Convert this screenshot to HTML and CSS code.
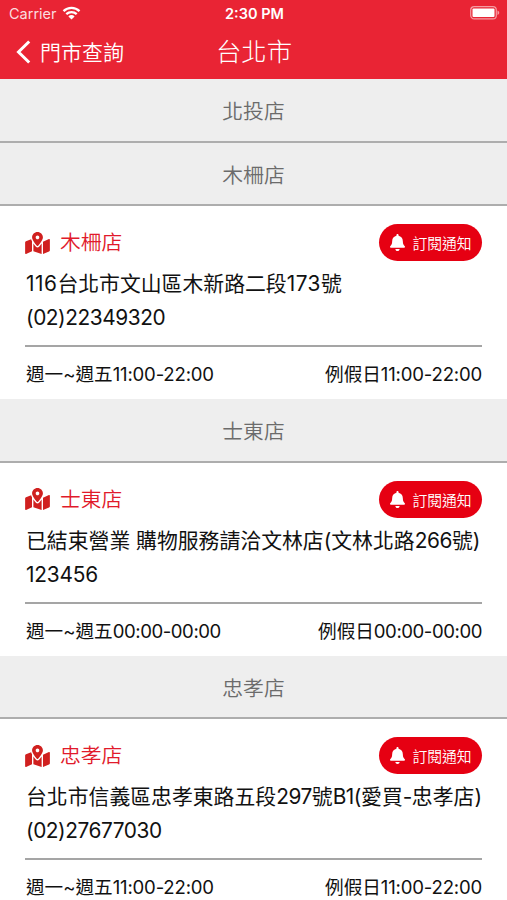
FILE: index.html
```html
<!DOCTYPE html>
<html lang="zh-Hant">
<head>
    <meta charset="UTF-8">
    <meta name="viewport" content="width=device-width, initial-scale=1.0">
    <title>門市查詢 - 台北市</title>
    <link rel="stylesheet" href="styles.css">
</head>
<body>
    <!-- Shared icons -->
    <svg class="hidden">
        <symbol id="icon-map" viewBox="0 0 576 512">
            <path d="M288 0c-69.600 0-126 56.400-126 126 0 56.300 82.400 158.800 113.900 196 6.400 7.500 17.800 7.500 24.200 0C331.700 284.800 414 182.300 414 126 414 56.400 357.600 0 288 0zm0 168c-23.200 0-42-18.800-42-42s18.800-42 42-42 42 18.800 42 42-18.800 42-42 42zM20.100 216A32 32 0 0 0 0 245.700v250.300c0 11.300 11.400 19.100 21.900 14.900L160 448V214.900c-8.800-16-16.100-31.500-21.300-46.400L20.100 216zM288 359.700c-14.100 0-27.400-6.200-36.500-17-19.700-23.200-40.600-49.600-59.500-76.700v182l192 64V266c-18.900 27.100-39.800 53.500-59.500 76.700-9.100 10.800-22.400 17-36.500 17zm266.100-198.500L416 224v288l139.900-56A32 32 0 0 0 576 426.300V176c0-11.300-11.400-19.100-21.900-14.800z"/>
        </symbol>
        <symbol id="icon-bell" viewBox="0 0 448 512">
            <path d="M224 512c35.300 0 64-28.700 64-64H160c0 35.300 28.600 64 64 64zm215.400-149.700c-19.300-20.800-55.500-52-55.500-154.300 0-77.700-54.500-139.900-127.900-155.200V32c0-17.700-14.300-32-32-32s-32 14.300-32 32v20.800C118.600 68.100 64.100 130.300 64.100 208c0 102.300-36.200 133.500-55.500 154.300-6 6.400-8.700 14.100-8.600 21.700.1 16.400 13 32 32.100 32h383.800c19.100 0 32-15.600 32.100-32 .1-7.600-2.600-15.300-8.600-21.700z"/>
        </symbol>
    </svg>

    <header class="header">
        <div class="status-bar">
            <div class="carrier">
                <span>Carrier</span>
                <svg class="wifi" viewBox="0 0 18 14">
                    <path d="M1 5.200a11.500 11.500 0 0 1 16 0M3.800 8.200a7.500 7.500 0 0 1 10.400 0"/>
                    <path class="wifi-dot" d="M9 13.500L5.900 10.400a4.400 4.400 0 0 1 6.200 0z"/>
                </svg>
            </div>
            <span class="clock">2:30 PM</span>
            <svg class="battery" viewBox="0 0 31 14">
                <rect class="battery-case" x="1.700" y="0.700" width="25.600" height="12.200" rx="3.500"/>
                <rect class="battery-level" x="3.500" y="2.500" width="22" height="8.600" rx="1"/>
                <path class="battery-cap" d="M28.500 4.600c2.300 1 2.300 3.400 0 4.400z"/>
            </svg>
        </div>
        <nav class="nav-bar">
            <a class="back">
                <svg class="chevron" viewBox="0 0 16 24"><path d="M14.200 1.500L3.500 12l10.700 10.500"/></svg>
                <span>門市查詢</span>
            </a>
            <h1>台北市</h1>
        </nav>
    </header>

    <main class="store-list">
        <h2 class="store-header">北投店</h2>

        <h2 class="store-header">木柵店</h2>
        <section class="store">
            <div class="store-top">
                <svg class="map-icon"><use href="#icon-map"/></svg>
                <h3>木柵店</h3>
                <button class="btn-notify"><svg class="bell-icon"><use href="#icon-bell"/></svg>訂閱通知</button>
            </div>
            <p class="info"><span class="num-wide">116</span>台北市文山區木新路二段<span class="num-wide">173</span>號</p>
            <p class="info"><span class="num">(02)22349320</span></p>
            <div class="hours">
                <span>週一~週五<span class="num-loose">11:00-22:00</span></span>
                <span>例假日<span class="num-loose">11:00-22:00</span></span>
            </div>
        </section>

        <h2 class="store-header">士東店</h2>
        <section class="store">
            <div class="store-top">
                <svg class="map-icon"><use href="#icon-map"/></svg>
                <h3>士東店</h3>
                <button class="btn-notify"><svg class="bell-icon"><use href="#icon-bell"/></svg>訂閱通知</button>
            </div>
            <p class="info">已結束營業 購物服務請洽文林店(文林北路<span class="num">266</span>號)</p>
            <p class="info"><span class="num-loose">123456</span></p>
            <div class="hours">
                <span>週一~週五<span class="num">00:00-00:00</span></span>
                <span>例假日<span class="num">00:00-00:00</span></span>
            </div>
        </section>

        <h2 class="store-header">忠孝店</h2>
        <section class="store">
            <div class="store-top">
                <svg class="map-icon"><use href="#icon-map"/></svg>
                <h3>忠孝店</h3>
                <button class="btn-notify"><svg class="bell-icon"><use href="#icon-bell"/></svg>訂閱通知</button>
            </div>
            <p class="info">台北市信義區忠孝東路五段<span class="num">297</span>號<span class="num">B1(</span>愛買<span class="num">-</span>忠孝店)</p>
            <p class="info"><span class="num">(02)27677030</span></p>
            <div class="hours">
                <span>週一~週五<span class="num-loose">11:00-22:00</span></span>
                <span>例假日<span class="num-loose">11:00-22:00</span></span>
            </div>
        </section>
    </main>
</body>
</html>
```
FILE: styles.css
```css
* {
    margin: 0;
    padding: 0;
    box-sizing: border-box;
}

body {
    height: 900px;
    overflow: hidden;
    font-family: Inter, "Noto Sans CJK TC", sans-serif;
    background: #fff;
    color: #111;
}

h1,
h2,
h3 {
    font-weight: 350;
}

.hidden {
    display: none;
}

/* Header */
.header {
    height: 79px;
    background: #e92434;
    color: #fff;
}

.status-bar {
    display: grid;
    grid-template-columns: 1fr auto 1fr;
    align-items: center;
    height: 27px;
    padding: 0 7px 0 9px;
    font-size: 14.5px;
}

.carrier {
    display: flex;
    align-items: center;
    gap: 5px;
    color: #fbdcdf;
}

.wifi {
    width: 19px;
    height: 14px;
    margin-top: -1px;
    fill: none;
    stroke: #fff;
    stroke-width: 2.3;
}

.wifi-dot {
    fill: #fff;
    stroke: none;
}

.clock {
    font-size: 14.5px;
    font-weight: 600;
}

.battery {
    justify-self: end;
    width: 31px;
    height: 14px;
    margin-top: -1px;
}

.battery-case {
    fill: none;
    stroke: #f59ba2;
    stroke-width: 1.2;
}

.battery-level {
    fill: #fff;
}

.battery-cap {
    fill: #f59ba2;
}

.nav-bar {
    display: grid;
    grid-template-columns: 1fr auto 1fr;
    align-items: center;
    height: 49px;
    padding: 0 15px;
}

.nav-bar h1 {
    padding-left: 1px;
    font-size: 25.4px;
    font-weight: 300;
    line-height: 48px;
}

.back {
    display: flex;
    align-items: center;
    gap: 9px;
    margin-top: -1px;
    font-size: 21px;
    font-weight: 350;
}

.chevron {
    width: 16px;
    height: 24px;
    margin-top: 2px;
    fill: none;
    stroke: #fff;
    stroke-width: 3;
}

/* Store list */
.store-header {
    height: 63.5px;
    padding-top: 1px;
    border-bottom: 2px solid #adadad;
    background: #eee;
    color: #6b6b6b;
    font-size: 20.8px;
    line-height: 64px;
    text-align: center;
}

.store {
    height: 193px;
    padding: 18px 25px 0;
}

.store-top {
    display: flex;
    align-items: center;
    height: 37px;
    margin-bottom: 6px;
}

.store-top h3 {
    flex: 1;
    color: #e11a2b;
    font-size: 20.8px;
    line-height: 35px;
}

.map-icon {
    width: 25px;
    height: 22px;
    margin-right: 10px;
    fill: #d0201f;
}

.btn-notify {
    display: flex;
    align-items: center;
    justify-content: center;
    gap: 7px;
    width: 103px;
    height: 37px;
    padding-left: 1px;
    border: none;
    border-radius: 19px;
    background: #e60012;
    color: #fff;
    font-family: inherit;
    font-size: 14.8px;
    font-weight: 350;
}

.bell-icon {
    width: 15px;
    height: 17px;
    fill: #fff;
}

.info {
    padding-left: 1px;
    font-size: 20.85px;
    line-height: 34px;
    white-space: nowrap;
}

/* Digit spacing */
.num {
    letter-spacing: -0.45px;
}

.num-loose {
    letter-spacing: -0.2px;
}

.num-wide {
    letter-spacing: 0.5px;
}

.hours {
    display: flex;
    justify-content: space-between;
    margin-top: 10px;
    padding-left: 1px;
    border-top: 2px solid #a5a5a5;
    font-size: 18.6px;
    line-height: 55px;
}
```
